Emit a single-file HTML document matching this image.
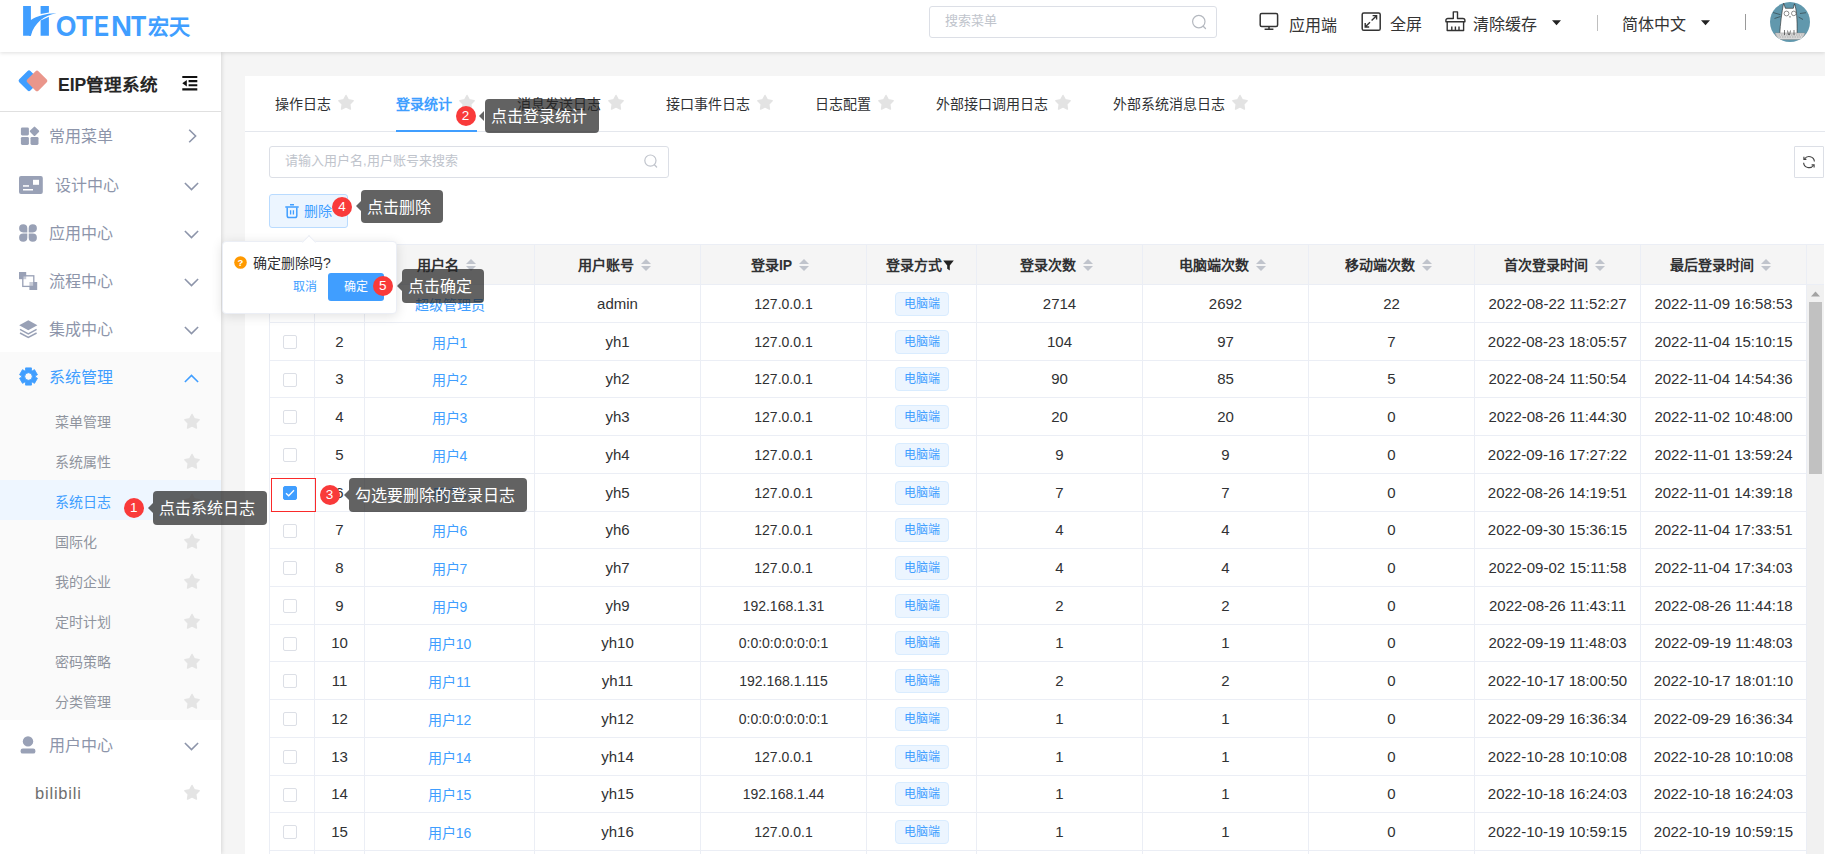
<!DOCTYPE html>
<html lang="zh-CN">
<head>
<meta charset="utf-8">
<title>EIP管理系统</title>
<style>
*{box-sizing:border-box;margin:0;padding:0}
html,body{width:1825px;height:854px;overflow:hidden;background:#f5f5f5;font-family:"Liberation Sans",sans-serif;color:#303133}
body{position:relative}
.a{position:absolute}
.t{position:absolute;white-space:nowrap}
svg{position:absolute;overflow:visible}
#hdr{position:absolute;left:0;top:0;width:1825px;height:52px;background:#fff;box-shadow:0 1px 4px rgba(0,0,0,.13);z-index:5}
#side{position:absolute;left:0;top:52px;width:221px;height:802px;background:#fff;box-shadow:1px 0 4px rgba(0,0,0,.12);z-index:4}
#card{position:absolute;left:245px;top:76px;width:1580px;height:778px;background:#fff;z-index:1}
.mi{position:absolute;left:50px;font-size:16px;line-height:22px;color:#8d95aa;white-space:nowrap}
.si{position:absolute;left:55px;font-size:14px;line-height:20px;color:#8f949e;white-space:nowrap}
.tab{position:absolute;top:93.7px;font-size:14px;line-height:20px;color:#303133;white-space:nowrap}
.th{position:absolute;top:244px;height:41px;background:#f5f5f5;border-right:1px solid #ebeef5;border-bottom:1px solid #ebeef5;border-top:1px solid #ebeef5;font-size:14px;font-weight:bold;color:#303133;text-align:center;line-height:40px;white-space:nowrap}
.th i{display:inline-block;position:relative;width:24px;height:14px;vertical-align:-3px}
.th i:before{content:"";position:absolute;left:7px;top:0;border:5px solid transparent;border-bottom-color:#c0c4cc;border-top-width:0}
.th i:after{content:"";position:absolute;left:7px;top:7px;border:5px solid transparent;border-top-color:#c0c4cc;border-bottom-width:0}
.r{position:absolute;left:269px;width:1538px;border-left:1px solid #ebeef5;border-bottom:1px solid #ebeef5}
.c{position:absolute;top:0;height:100%;border-right:1px solid #ebeef5;text-align:center;font-size:15px;color:#303133;white-space:nowrap}
.c a{color:#409eff;font-size:14px;position:relative;top:1px}
.c span.n{font-size:15px}
.tag{display:inline-block;position:relative;top:-1.5px;width:54px;height:24px;line-height:23px;border:1px solid #d9ecff;background:#ecf5ff;border-radius:4px;color:#409eff;font-size:12px;vertical-align:middle}
.cb{position:absolute;left:13px;width:14px;height:14px;border:1px solid #dcdfe6;border-radius:2px;background:#fff}
.tip{position:absolute;height:33.5px;border-radius:4px;background:rgba(38,38,38,.72);color:#fff;font-size:16px;line-height:36px;padding-left:6px;white-space:nowrap;z-index:20}
.tip:before{content:"";position:absolute;left:-5.5px;top:11.5px;border:5.5px solid transparent;border-right-color:rgba(38,38,38,.72);border-left-width:0}
.bdg{position:absolute;width:20px;height:20px;border-radius:10px;background:#f93a3a;color:#fff;font-size:13.5px;line-height:20px;text-align:center;z-index:21}
</style>
</head>
<body>
<div id="hdr">
<svg style="left:22px;top:5px" width="172" height="34" viewBox="0 0 172 34"><path d="M1.1 1h7.8v29.75H1.1z" fill="#409eff"/><path d="M18.6 1h8.3v6.5L18.6 8.9z" fill="#409eff"/><path d="M18.6 15.4L26.9 11.7v19.05h-8.3z" fill="#409eff"/><path d="M8.9 14.9C15 11.2 24 8.2 34.4 8.3 22.5 10.6 12.2 17.5 8.9 30.75H7V14.9z" fill="#409eff"/><g font-family="Liberation Sans, sans-serif" font-weight="bold" font-size="28.6" fill="#409eff"><text transform="translate(33.80 31.2) scale(0.930 1)">O</text><text transform="translate(53.95 31.2) scale(0.980 1)">T</text><text transform="translate(72.10 31.2) scale(0.785 1)">E</text><text transform="translate(89.10 31.2) scale(1.020 1)">N</text><text transform="translate(109.00 31.2) scale(0.870 1)">T</text></g></svg>
<div class="t" style="left:148px;top:11px;font-size:21px;line-height:32px;color:#409eff;font-weight:bold">宏天</div>
<div class="a" style="left:929px;top:6px;width:288px;height:32px;border:1px solid #dcdfe6;border-radius:3px;background:#fff"></div>
<div class="t" style="left:945px;top:12px;font-size:13px;line-height:18px;color:#c0c4cc">搜索菜单</div>
<svg style="left:1191px;top:14px" width="16" height="16" viewBox="0 0 16 16"><circle cx="7.8" cy="7.6" r="6.2" fill="none" stroke="#b4b8bf" stroke-width="1.2"/><path d="M12.2 12.2l2.3 2.3" stroke="#b4b8bf" stroke-width="1.3" stroke-linecap="round"/></svg>
<svg style="left:1259px;top:12px" width="20" height="18" viewBox="0 0 20 18"><rect x="1.2" y="1.4" width="17.4" height="13" rx="1.5" fill="none" stroke="#333" stroke-width="1.5"/><path d="M10 14.4v2.6M5.6 17.2h8.8" stroke="#333" stroke-width="1.5" fill="none"/></svg>
<div class="t" style="left:1289px;top:14.5px;font-size:16px;line-height:22px;color:#333">应用端</div>
<svg style="left:1361px;top:12px" width="20" height="19" viewBox="0 0 20 19"><rect x="1.2" y="0.9" width="18" height="17.4" rx="1.6" fill="none" stroke="#333" stroke-width="1.5"/><path d="M10.6 8.6l4.9-4.9M11.6 3.6h4v4M9 10.2l-4.6 4.6M4.2 11v4h4" stroke="#333" stroke-width="1.4" fill="none"/></svg>
<div class="t" style="left:1390px;top:13.5px;font-size:16px;line-height:22px;color:#333">全屏</div>
<svg style="left:1445px;top:11px" width="21" height="20" viewBox="0 0 21 20"><path d="M8.3 0.9h4.2v6.6h5.4a2 2 0 0 1 2 2v1.2H0.9V9.5a2 2 0 0 1 2-2h5.4z M2.2 10.7v8.8h16.4v-8.8 M6.8 19.5v-4 M10.4 19.5v-4 M14 19.5v-4" fill="none" stroke="#333" stroke-width="1.4" stroke-linejoin="round"/></svg>
<div class="t" style="left:1473px;top:13.5px;font-size:16px;line-height:22px;color:#333">清除缓存</div>
<svg style="left:1552.2px;top:20.2px" width="9" height="6" viewBox="0 0 9 6"><path d="M0 0.3h9L4.5 5.3z" fill="#222"/></svg>
<div class="a" style="left:1597px;top:15px;width:1px;height:16px;background:#bfbfbf"></div>
<div class="t" style="left:1622px;top:13.5px;font-size:16px;line-height:22px;color:#333">简体中文</div>
<svg style="left:1700.9px;top:20.2px" width="9" height="6" viewBox="0 0 9 6"><path d="M0 0.3h9L4.5 5.3z" fill="#222"/></svg>
<div class="a" style="left:1745px;top:14px;width:1px;height:16px;background:#9a9a9a"></div>
<svg style="left:1770px;top:2px" width="40" height="40" viewBox="0 0 40 40"><defs><clipPath id="av"><circle cx="20" cy="20" r="20"/></clipPath></defs><g clip-path="url(#av)"><rect width="40" height="40" fill="#6198ad"/><path d="M9.7 32.5C10.3 22 11.8 10 13.6 1.2L15.4 6.3H23.3L24.5 1.8C26.6 8 27.3 16 27.1 32.5z" fill="#fff" stroke="#222" stroke-width=".6"/><circle cx="16.5" cy="11.5" r="2.4" fill="#fff" stroke="#444" stroke-width=".6"/><circle cx="23.8" cy="11.4" r="2.3" fill="#fff" stroke="#444" stroke-width=".6"/><path d="M3 10.5l7.5 2.2M4.5 16.5l6-2M30 11.5l6-.8M28.5 15l4.5 2.5" stroke="#222" stroke-width=".5" fill="none"/><path d="M19 14.6h2l-1 1.2z" fill="#444"/><path d="M5 31h30l-2.5 6.5h-25z" fill="#d9d9d9" stroke="#888" stroke-width=".5"/><path d="M6 33h28M7 35h26" stroke="#999" stroke-width=".7" stroke-dasharray="1.5 1"/><path d="M14.5 28v5M17.5 28.5l1 4.5M20.5 28.5l-1 4.5M24 28v5" stroke="#222" stroke-width=".6"/></g></svg>
</div>
<div id="side">
<svg style="left:17px;top:17px" width="32" height="24" viewBox="0 0 32 24"><rect x="-7.9" y="-7.9" width="15.8" height="15.8" rx="2" transform="translate(12 11.75) rotate(45)" fill="#409eff"/><rect x="-7.9" y="-7.9" width="15.8" height="15.8" rx="2" transform="translate(20 11.9) rotate(45)" fill="#ea968b"/></svg>
<div class="t" style="left:58px;top:20.5px;font-size:17.6px;line-height:24px;font-weight:bold;color:#262626">EIP管理系统</div>
<svg style="left:182px;top:23px" width="16" height="15" viewBox="0 0 16 15"><path d="M0.3 2h15M6.6 6.1h8.7M6.6 10.3h8.7M0.3 14.4h15" stroke="#111" stroke-width="2.1"/><path d="M0.3 8.2L4.8 5v6.4z" fill="#111"/></svg>
<div class="a" style="left:0;top:59px;width:221px;height:1px;background:#e0e0e0"></div>
<div class="a" style="left:0;top:300px;width:221px;height:368px;background:#fafafa"></div>
<div class="a" style="left:0;top:428px;width:221px;height:40px;background:#eef6ff"></div>
<div class="mi" style="left:49px;top:74px;color:#8d95aa">常用菜单</div><svg style="left:187.5px;top:76.5px" width="9" height="14" viewBox="0 0 9 14"><path d="M1.2 0.8l6.4 6.2-6.4 6.2" fill="none" stroke="#8d95aa" stroke-width="1.6"/></svg>
<div class="mi" style="left:55px;top:123px;color:#8d95aa">设计中心</div><svg style="left:184px;top:129.5px" width="15" height="9" viewBox="0 0 15 9"><path d="M0.9 1l6.6 6.6L14.1 1" fill="none" stroke="#8d95aa" stroke-width="1.6"/></svg>
<div class="mi" style="left:49px;top:171px;color:#8d95aa">应用中心</div><svg style="left:184px;top:177.5px" width="15" height="9" viewBox="0 0 15 9"><path d="M0.9 1l6.6 6.6L14.1 1" fill="none" stroke="#8d95aa" stroke-width="1.6"/></svg>
<div class="mi" style="left:49px;top:219px;color:#8d95aa">流程中心</div><svg style="left:184px;top:225.5px" width="15" height="9" viewBox="0 0 15 9"><path d="M0.9 1l6.6 6.6L14.1 1" fill="none" stroke="#8d95aa" stroke-width="1.6"/></svg>
<div class="mi" style="left:49px;top:267px;color:#8d95aa">集成中心</div><svg style="left:184px;top:273.5px" width="15" height="9" viewBox="0 0 15 9"><path d="M0.9 1l6.6 6.6L14.1 1" fill="none" stroke="#8d95aa" stroke-width="1.6"/></svg>
<div class="mi" style="left:49px;top:315px;color:#409eff">系统管理</div><svg style="left:184px;top:321.5px" width="15" height="9" viewBox="0 0 15 9"><path d="M0.9 8l6.6-6.6L14.1 8" fill="none" stroke="#409eff" stroke-width="1.6"/></svg>
<div class="mi" style="left:49px;top:683px;color:#8d95aa">用户中心</div><svg style="left:184px;top:689.5px" width="15" height="9" viewBox="0 0 15 9"><path d="M0.9 1l6.6 6.6L14.1 1" fill="none" stroke="#8d95aa" stroke-width="1.6"/></svg>
<svg style="left:20px;top:75.3px" width="19" height="18" viewBox="0 0 19 18"><rect x="0.9" y="0.4" width="8" height="8" rx="1.4" fill="#99a1b6"/><rect x="0.9" y="9.9" width="8" height="8" rx="1.4" fill="#99a1b6"/><rect x="10.5" y="9.9" width="8" height="8" rx="1.4" fill="#99a1b6"/><rect x="-3.6" y="-3.6" width="7.2" height="7.2" rx="1" transform="translate(14.5 4.3) rotate(45)" fill="#99a1b6"/></svg>
<svg style="left:19px;top:124px" width="24" height="18" viewBox="0 0 24 18"><rect x="0" y="0" width="23.8" height="18" rx="2" fill="#99a1b6"/><rect x="14" y="3.8" width="6" height="5" fill="#fff"/><rect x="4" y="9.2" width="6" height="1.5" fill="#fff"/><rect x="4" y="13" width="10" height="1.5" fill="#fff"/></svg>
<svg style="left:19px;top:172px" width="18" height="18" viewBox="0 0 18 18"><path d="M4.2 0.2A4.1 4.1 0 0 1 8.3 4.3V8.4H4.2A4.1 4.1 0 0 1 4.2 0.2zM13.8 0.2A4.1 4.1 0 0 1 13.8 8.4H9.7V4.3A4.1 4.1 0 0 1 13.8 0.2zM4.2 17.8A4.1 4.1 0 0 1 4.2 9.6H8.3V13.7A4.1 4.1 0 0 1 4.2 17.8zM13.8 17.8A4.1 4.1 0 0 1 9.7 13.7V9.6H13.8A4.1 4.1 0 0 1 13.8 17.8z" fill="#99a1b6"/></svg>
<svg style="left:19px;top:220px" width="18" height="18" viewBox="0 0 18 18"><rect x="0" y="0" width="7.2" height="7.2" fill="#99a1b6"/><rect x="10.4" y="10" width="7.8" height="8" fill="#99a1b6"/><rect x="3.8" y="3.8" width="11" height="10.6" fill="#fff" stroke="#99a1b6" stroke-width="1.3"/><rect x="3.2" y="3.2" width="4" height="4" fill="#99a1b6" opacity=".55"/><rect x="10.4" y="10" width="4.6" height="4.4" fill="#99a1b6" opacity=".55"/></svg>
<svg style="left:19px;top:268px" width="19" height="18" viewBox="0 0 19 18"><path d="M9.3 0.2L18.4 5.2 9.3 10.2 0.2 5.2z" fill="#99a1b6"/><path d="M1 9.4l8.3 4.4 8.3-4.4M1 13l8.3 4.4 8.3-4.4" fill="none" stroke="#99a1b6" stroke-width="1.5"/></svg>
<svg style="left:18.6px;top:315.4px" width="19" height="19" viewBox="-9.5 -9.5 19 19"><path d="M-2.95 -8.61 L2.95 -8.61 L2.88 -6.27 L3.99 -5.63 L5.98 -6.86 L8.93 -1.75 L6.87 -0.64 L6.87 0.64 L8.93 1.75 L5.98 6.86 L3.99 5.63 L2.88 6.27 L2.95 8.61 L-2.95 8.61 L-2.88 6.27 L-3.99 5.63 L-5.98 6.86 L-8.93 1.75 L-6.87 0.64 L-6.87 -0.64 L-8.93 -1.75 L-5.98 -6.86 L-3.99 -5.63 L-2.88 -6.27Z M3.8 0A3.8 3.8 0 1 0 -3.8 0A3.8 3.8 0 1 0 3.8 0Z" fill="#409eff" fill-rule="evenodd" stroke="#409eff" stroke-width="0.9" stroke-linejoin="round"/></svg>
<svg style="left:20px;top:684px" width="16" height="18" viewBox="0 0 16 18"><circle cx="8" cy="5.4" r="5.2" fill="#99a1b6"/><rect x="0.6" y="12.6" width="14.8" height="5" rx="2.2" fill="#99a1b6"/></svg>
<div class="si" style="top:360px;color:#8f949e">菜单管理</div><svg style="left:182.5px;top:361.3px" width="18" height="18" viewBox="-9 -9 18 18"><path d="M0.00 -7.50L2.29 -3.16L7.13 -2.32L3.71 1.21L4.41 6.07L0.00 3.90L-4.41 6.07L-3.71 1.21L-7.13 -2.32L-2.29 -3.16Z" fill="#e4e4e4" stroke="#e4e4e4" stroke-width="1.5" stroke-linejoin="round"/></svg>
<div class="si" style="top:400px;color:#8f949e">系统属性</div><svg style="left:182.5px;top:401.3px" width="18" height="18" viewBox="-9 -9 18 18"><path d="M0.00 -7.50L2.29 -3.16L7.13 -2.32L3.71 1.21L4.41 6.07L0.00 3.90L-4.41 6.07L-3.71 1.21L-7.13 -2.32L-2.29 -3.16Z" fill="#e4e4e4" stroke="#e4e4e4" stroke-width="1.5" stroke-linejoin="round"/></svg>
<div class="si" style="top:440px;color:#409eff">系统日志</div><svg style="left:182.5px;top:441.3px" width="18" height="18" viewBox="-9 -9 18 18"><path d="M0.00 -7.50L2.29 -3.16L7.13 -2.32L3.71 1.21L4.41 6.07L0.00 3.90L-4.41 6.07L-3.71 1.21L-7.13 -2.32L-2.29 -3.16Z" fill="#e4e4e4" stroke="#e4e4e4" stroke-width="1.5" stroke-linejoin="round"/></svg>
<div class="si" style="top:480px;color:#8f949e">国际化</div><svg style="left:182.5px;top:481.3px" width="18" height="18" viewBox="-9 -9 18 18"><path d="M0.00 -7.50L2.29 -3.16L7.13 -2.32L3.71 1.21L4.41 6.07L0.00 3.90L-4.41 6.07L-3.71 1.21L-7.13 -2.32L-2.29 -3.16Z" fill="#e4e4e4" stroke="#e4e4e4" stroke-width="1.5" stroke-linejoin="round"/></svg>
<div class="si" style="top:520px;color:#8f949e">我的企业</div><svg style="left:182.5px;top:521.3px" width="18" height="18" viewBox="-9 -9 18 18"><path d="M0.00 -7.50L2.29 -3.16L7.13 -2.32L3.71 1.21L4.41 6.07L0.00 3.90L-4.41 6.07L-3.71 1.21L-7.13 -2.32L-2.29 -3.16Z" fill="#e4e4e4" stroke="#e4e4e4" stroke-width="1.5" stroke-linejoin="round"/></svg>
<div class="si" style="top:560px;color:#8f949e">定时计划</div><svg style="left:182.5px;top:561.3px" width="18" height="18" viewBox="-9 -9 18 18"><path d="M0.00 -7.50L2.29 -3.16L7.13 -2.32L3.71 1.21L4.41 6.07L0.00 3.90L-4.41 6.07L-3.71 1.21L-7.13 -2.32L-2.29 -3.16Z" fill="#e4e4e4" stroke="#e4e4e4" stroke-width="1.5" stroke-linejoin="round"/></svg>
<div class="si" style="top:600px;color:#8f949e">密码策略</div><svg style="left:182.5px;top:601.3px" width="18" height="18" viewBox="-9 -9 18 18"><path d="M0.00 -7.50L2.29 -3.16L7.13 -2.32L3.71 1.21L4.41 6.07L0.00 3.90L-4.41 6.07L-3.71 1.21L-7.13 -2.32L-2.29 -3.16Z" fill="#e4e4e4" stroke="#e4e4e4" stroke-width="1.5" stroke-linejoin="round"/></svg>
<div class="si" style="top:640px;color:#8f949e">分类管理</div><svg style="left:182.5px;top:641.3px" width="18" height="18" viewBox="-9 -9 18 18"><path d="M0.00 -7.50L2.29 -3.16L7.13 -2.32L3.71 1.21L4.41 6.07L0.00 3.90L-4.41 6.07L-3.71 1.21L-7.13 -2.32L-2.29 -3.16Z" fill="#e4e4e4" stroke="#e4e4e4" stroke-width="1.5" stroke-linejoin="round"/></svg>
<div class="t" style="left:35px;top:730px;font-size:16.5px;line-height:22px;color:#6e6e6e;letter-spacing:.8px">bilibili</div><svg style="left:182.5px;top:732.3px" width="18" height="18" viewBox="-9 -9 18 18"><path d="M0.00 -7.50L2.29 -3.16L7.13 -2.32L3.71 1.21L4.41 6.07L0.00 3.90L-4.41 6.07L-3.71 1.21L-7.13 -2.32L-2.29 -3.16Z" fill="#e4e4e4" stroke="#e4e4e4" stroke-width="1.5" stroke-linejoin="round"/></svg>
</div>
<div id="card"></div>
<div class="a" style="left:0;top:0;z-index:2">
<div class="a" style="left:245px;top:131px;width:1580px;height:1px;background:#e4e7ed"></div>
<div class="a" style="left:396px;top:129.5px;width:80.5px;height:2px;background:#409eff"></div>
<div class="tab" style="left:275px;color:#303133">操作日志</div><svg style="left:337.3px;top:94.2px" width="18" height="18" viewBox="-9 -9 18 18"><path d="M0.00 -7.50L2.29 -3.16L7.13 -2.32L3.71 1.21L4.41 6.07L0.00 3.90L-4.41 6.07L-3.71 1.21L-7.13 -2.32L-2.29 -3.16Z" fill="#e3e3e3" stroke="#e3e3e3" stroke-width="1.5" stroke-linejoin="round"/></svg>
<div class="tab" style="left:396px;color:#409eff;font-weight:bold">登录统计</div><svg style="left:458.3px;top:94.2px" width="18" height="18" viewBox="-9 -9 18 18"><path d="M0.00 -7.50L2.29 -3.16L7.13 -2.32L3.71 1.21L4.41 6.07L0.00 3.90L-4.41 6.07L-3.71 1.21L-7.13 -2.32L-2.29 -3.16Z" fill="#e3e3e3" stroke="#e3e3e3" stroke-width="1.5" stroke-linejoin="round"/></svg>
<div class="tab" style="left:517px;color:#303133">消息发送日志</div><svg style="left:607.3px;top:94.2px" width="18" height="18" viewBox="-9 -9 18 18"><path d="M0.00 -7.50L2.29 -3.16L7.13 -2.32L3.71 1.21L4.41 6.07L0.00 3.90L-4.41 6.07L-3.71 1.21L-7.13 -2.32L-2.29 -3.16Z" fill="#e3e3e3" stroke="#e3e3e3" stroke-width="1.5" stroke-linejoin="round"/></svg>
<div class="tab" style="left:666px;color:#303133">接口事件日志</div><svg style="left:756.3px;top:94.2px" width="18" height="18" viewBox="-9 -9 18 18"><path d="M0.00 -7.50L2.29 -3.16L7.13 -2.32L3.71 1.21L4.41 6.07L0.00 3.90L-4.41 6.07L-3.71 1.21L-7.13 -2.32L-2.29 -3.16Z" fill="#e3e3e3" stroke="#e3e3e3" stroke-width="1.5" stroke-linejoin="round"/></svg>
<div class="tab" style="left:815px;color:#303133">日志配置</div><svg style="left:877.3px;top:94.2px" width="18" height="18" viewBox="-9 -9 18 18"><path d="M0.00 -7.50L2.29 -3.16L7.13 -2.32L3.71 1.21L4.41 6.07L0.00 3.90L-4.41 6.07L-3.71 1.21L-7.13 -2.32L-2.29 -3.16Z" fill="#e3e3e3" stroke="#e3e3e3" stroke-width="1.5" stroke-linejoin="round"/></svg>
<div class="tab" style="left:936px;color:#303133">外部接口调用日志</div><svg style="left:1054.3px;top:94.2px" width="18" height="18" viewBox="-9 -9 18 18"><path d="M0.00 -7.50L2.29 -3.16L7.13 -2.32L3.71 1.21L4.41 6.07L0.00 3.90L-4.41 6.07L-3.71 1.21L-7.13 -2.32L-2.29 -3.16Z" fill="#e3e3e3" stroke="#e3e3e3" stroke-width="1.5" stroke-linejoin="round"/></svg>
<div class="tab" style="left:1113px;color:#303133">外部系统消息日志</div><svg style="left:1231.3px;top:94.2px" width="18" height="18" viewBox="-9 -9 18 18"><path d="M0.00 -7.50L2.29 -3.16L7.13 -2.32L3.71 1.21L4.41 6.07L0.00 3.90L-4.41 6.07L-3.71 1.21L-7.13 -2.32L-2.29 -3.16Z" fill="#e3e3e3" stroke="#e3e3e3" stroke-width="1.5" stroke-linejoin="round"/></svg>
<div class="a" style="left:269px;top:146px;width:400px;height:32px;border:1px solid #dcdfe6;border-radius:3px;background:#fff"></div>
<div class="t" style="left:285px;top:152px;font-size:13px;line-height:18px;color:#c0c4cc">请输入用户名,用户账号来搜索</div>
<svg style="left:643px;top:153px" width="16" height="16" viewBox="0 0 16 16"><circle cx="7.4" cy="7.6" r="5.6" fill="none" stroke="#c0c4cc" stroke-width="1.2"/><path d="M11.4 11.8l2.2 2.2" stroke="#c0c4cc" stroke-width="1.3" stroke-linecap="round"/></svg>
<div class="a" style="left:1794px;top:146px;width:30px;height:32px;border:1px solid #dcdfe6;border-radius:1px;background:#fff"></div>
<svg style="left:1802.2px;top:154.9px" width="14" height="14" viewBox="-7 -7 14 14"><path d="M-4.5 -3A5.4 5.4 0 0 1 5.4 -0.5M-5.4 0.7A5.4 5.4 0 0 0 4.5 3.2" fill="none" stroke="#444" stroke-width="1.15"/><path d="M-5.1 -5.2v2.5h2.5M5.1 5.4v-2.5h-2.5" fill="none" stroke="#444" stroke-width="1.15"/></svg>
<div class="a" style="left:269px;top:194px;width:79px;height:34px;border:1px solid #b9dbff;border-radius:3px;background:#ecf5ff"></div>
<svg style="left:285px;top:203.5px" width="14" height="15" viewBox="0 0 14 15"><path d="M0.3 3.1h13.4M5 0.8h4" stroke="#409eff" stroke-width="1.5" fill="none"/><path d="M2.2 3.4v8.4a1.8 1.8 0 0 0 1.8 1.8h6a1.8 1.8 0 0 0 1.8-1.8V3.4" fill="none" stroke="#409eff" stroke-width="1.5"/><path d="M5.6 6.2v4.4M8.4 6.2v4.4" stroke="#409eff" stroke-width="1.3"/></svg>
<div class="t" style="left:304px;top:201px;font-size:14px;line-height:20px;color:#409eff">删除</div>
<div class="a" style="left:269px;top:244px;width:1555px;height:41px;background:#f5f5f5;border-top:1px solid #ebeef5;border-bottom:1px solid #ebeef5;border-left:1px solid #ebeef5"></div>
<div class="th" style="left:270px;width:45px"></div>
<div class="th" style="left:315px;width:50px"></div>
<div class="th" style="left:365px;width:170px">用户名<i></i></div>
<div class="th" style="left:535px;width:166px">用户账号<i></i></div>
<div class="th" style="left:701px;width:166px">登录IP<i></i></div>
<div class="th" style="left:867px;width:110px;padding-right:3px">登录方式<svg style="position:relative;display:inline-block;vertical-align:-1px;margin-left:1px" width="11" height="11" viewBox="0 0 11 11"><path d="M0.2 0.4h10.6L6.8 5.4v5.2L4.2 8.8V5.4z" fill="#222"/></svg></div>
<div class="th" style="left:977px;width:166px">登录次数<i></i></div>
<div class="th" style="left:1143px;width:166px">电脑端次数<i></i></div>
<div class="th" style="left:1309px;width:166px">移动端次数<i></i></div>
<div class="th" style="left:1475px;width:166px">首次登录时间<i></i></div>
<div class="th" style="left:1641px;width:166px">最后登录时间<i></i></div>
<div class="r" style="top:285px;height:38px;line-height:37px"><div class="c" style="left:0px;width:45px"><span class="cb" style="top:12px"></span></div><div class="c" style="left:45px;width:50px">1</div><div class="c" style="left:95px;width:170px"><a>超级管理员</a></div><div class="c" style="left:265px;width:166px">admin</div><div class="c" style="left:431px;width:166px"><span style="font-size:14px">127.0.0.1</span></div><div class="c" style="left:597px;width:110px"><span class="tag">电脑端</span></div><div class="c" style="left:707px;width:166px">2714</div><div class="c" style="left:873px;width:166px">2692</div><div class="c" style="left:1039px;width:166px">22</div><div class="c" style="left:1205px;width:166px">2022-08-22 11:52:27</div><div class="c" style="left:1371px;width:166px">2022-11-09 16:58:53</div></div>
<div class="r" style="top:323px;height:38px;line-height:37px"><div class="c" style="left:0px;width:45px"><span class="cb" style="top:12px"></span></div><div class="c" style="left:45px;width:50px">2</div><div class="c" style="left:95px;width:170px"><a>用户1</a></div><div class="c" style="left:265px;width:166px">yh1</div><div class="c" style="left:431px;width:166px"><span style="font-size:14px">127.0.0.1</span></div><div class="c" style="left:597px;width:110px"><span class="tag">电脑端</span></div><div class="c" style="left:707px;width:166px">104</div><div class="c" style="left:873px;width:166px">97</div><div class="c" style="left:1039px;width:166px">7</div><div class="c" style="left:1205px;width:166px">2022-08-23 18:05:57</div><div class="c" style="left:1371px;width:166px">2022-11-04 15:10:15</div></div>
<div class="r" style="top:361px;height:37px;line-height:36px"><div class="c" style="left:0px;width:45px"><span class="cb" style="top:12px"></span></div><div class="c" style="left:45px;width:50px">3</div><div class="c" style="left:95px;width:170px"><a>用户2</a></div><div class="c" style="left:265px;width:166px">yh2</div><div class="c" style="left:431px;width:166px"><span style="font-size:14px">127.0.0.1</span></div><div class="c" style="left:597px;width:110px"><span class="tag">电脑端</span></div><div class="c" style="left:707px;width:166px">90</div><div class="c" style="left:873px;width:166px">85</div><div class="c" style="left:1039px;width:166px">5</div><div class="c" style="left:1205px;width:166px">2022-08-24 11:50:54</div><div class="c" style="left:1371px;width:166px">2022-11-04 14:54:36</div></div>
<div class="r" style="top:398px;height:38px;line-height:37px"><div class="c" style="left:0px;width:45px"><span class="cb" style="top:12px"></span></div><div class="c" style="left:45px;width:50px">4</div><div class="c" style="left:95px;width:170px"><a>用户3</a></div><div class="c" style="left:265px;width:166px">yh3</div><div class="c" style="left:431px;width:166px"><span style="font-size:14px">127.0.0.1</span></div><div class="c" style="left:597px;width:110px"><span class="tag">电脑端</span></div><div class="c" style="left:707px;width:166px">20</div><div class="c" style="left:873px;width:166px">20</div><div class="c" style="left:1039px;width:166px">0</div><div class="c" style="left:1205px;width:166px">2022-08-26 11:44:30</div><div class="c" style="left:1371px;width:166px">2022-11-02 10:48:00</div></div>
<div class="r" style="top:436px;height:38px;line-height:37px"><div class="c" style="left:0px;width:45px"><span class="cb" style="top:12px"></span></div><div class="c" style="left:45px;width:50px">5</div><div class="c" style="left:95px;width:170px"><a>用户4</a></div><div class="c" style="left:265px;width:166px">yh4</div><div class="c" style="left:431px;width:166px"><span style="font-size:14px">127.0.0.1</span></div><div class="c" style="left:597px;width:110px"><span class="tag">电脑端</span></div><div class="c" style="left:707px;width:166px">9</div><div class="c" style="left:873px;width:166px">9</div><div class="c" style="left:1039px;width:166px">0</div><div class="c" style="left:1205px;width:166px">2022-09-16 17:27:22</div><div class="c" style="left:1371px;width:166px">2022-11-01 13:59:24</div></div>
<div class="r" style="top:474px;height:38px;line-height:37px"><div class="c" style="left:0px;width:45px"><span class="cb" style="top:12px;background:#409eff;border-color:#409eff"></span><svg style="left:14.8px;top:15px" width="10" height="8" viewBox="0 0 10 8"><path d="M1 4.2l2.7 2.6L9 1.2" fill="none" stroke="#fff" stroke-width="1.3"/></svg></div><div class="c" style="left:45px;width:50px">6</div><div class="c" style="left:95px;width:170px"><a>用户5</a></div><div class="c" style="left:265px;width:166px">yh5</div><div class="c" style="left:431px;width:166px"><span style="font-size:14px">127.0.0.1</span></div><div class="c" style="left:597px;width:110px"><span class="tag">电脑端</span></div><div class="c" style="left:707px;width:166px">7</div><div class="c" style="left:873px;width:166px">7</div><div class="c" style="left:1039px;width:166px">0</div><div class="c" style="left:1205px;width:166px">2022-08-26 14:19:51</div><div class="c" style="left:1371px;width:166px">2022-11-01 14:39:18</div></div>
<div class="r" style="top:512px;height:37px;line-height:36px"><div class="c" style="left:0px;width:45px"><span class="cb" style="top:12px"></span></div><div class="c" style="left:45px;width:50px">7</div><div class="c" style="left:95px;width:170px"><a>用户6</a></div><div class="c" style="left:265px;width:166px">yh6</div><div class="c" style="left:431px;width:166px"><span style="font-size:14px">127.0.0.1</span></div><div class="c" style="left:597px;width:110px"><span class="tag">电脑端</span></div><div class="c" style="left:707px;width:166px">4</div><div class="c" style="left:873px;width:166px">4</div><div class="c" style="left:1039px;width:166px">0</div><div class="c" style="left:1205px;width:166px">2022-09-30 15:36:15</div><div class="c" style="left:1371px;width:166px">2022-11-04 17:33:51</div></div>
<div class="r" style="top:549px;height:38px;line-height:37px"><div class="c" style="left:0px;width:45px"><span class="cb" style="top:12px"></span></div><div class="c" style="left:45px;width:50px">8</div><div class="c" style="left:95px;width:170px"><a>用户7</a></div><div class="c" style="left:265px;width:166px">yh7</div><div class="c" style="left:431px;width:166px"><span style="font-size:14px">127.0.0.1</span></div><div class="c" style="left:597px;width:110px"><span class="tag">电脑端</span></div><div class="c" style="left:707px;width:166px">4</div><div class="c" style="left:873px;width:166px">4</div><div class="c" style="left:1039px;width:166px">0</div><div class="c" style="left:1205px;width:166px">2022-09-02 15:11:58</div><div class="c" style="left:1371px;width:166px">2022-11-04 17:34:03</div></div>
<div class="r" style="top:587px;height:38px;line-height:37px"><div class="c" style="left:0px;width:45px"><span class="cb" style="top:12px"></span></div><div class="c" style="left:45px;width:50px">9</div><div class="c" style="left:95px;width:170px"><a>用户9</a></div><div class="c" style="left:265px;width:166px">yh9</div><div class="c" style="left:431px;width:166px"><span style="font-size:14px">192.168.1.31</span></div><div class="c" style="left:597px;width:110px"><span class="tag">电脑端</span></div><div class="c" style="left:707px;width:166px">2</div><div class="c" style="left:873px;width:166px">2</div><div class="c" style="left:1039px;width:166px">0</div><div class="c" style="left:1205px;width:166px">2022-08-26 11:43:11</div><div class="c" style="left:1371px;width:166px">2022-08-26 11:44:18</div></div>
<div class="r" style="top:625px;height:37px;line-height:36px"><div class="c" style="left:0px;width:45px"><span class="cb" style="top:12px"></span></div><div class="c" style="left:45px;width:50px">10</div><div class="c" style="left:95px;width:170px"><a>用户10</a></div><div class="c" style="left:265px;width:166px">yh10</div><div class="c" style="left:431px;width:166px"><span style="font-size:14px">0:0:0:0:0:0:0:1</span></div><div class="c" style="left:597px;width:110px"><span class="tag">电脑端</span></div><div class="c" style="left:707px;width:166px">1</div><div class="c" style="left:873px;width:166px">1</div><div class="c" style="left:1039px;width:166px">0</div><div class="c" style="left:1205px;width:166px">2022-09-19 11:48:03</div><div class="c" style="left:1371px;width:166px">2022-09-19 11:48:03</div></div>
<div class="r" style="top:662px;height:38px;line-height:37px"><div class="c" style="left:0px;width:45px"><span class="cb" style="top:12px"></span></div><div class="c" style="left:45px;width:50px">11</div><div class="c" style="left:95px;width:170px"><a>用户11</a></div><div class="c" style="left:265px;width:166px">yh11</div><div class="c" style="left:431px;width:166px"><span style="font-size:14px">192.168.1.115</span></div><div class="c" style="left:597px;width:110px"><span class="tag">电脑端</span></div><div class="c" style="left:707px;width:166px">2</div><div class="c" style="left:873px;width:166px">2</div><div class="c" style="left:1039px;width:166px">0</div><div class="c" style="left:1205px;width:166px">2022-10-17 18:00:50</div><div class="c" style="left:1371px;width:166px">2022-10-17 18:01:10</div></div>
<div class="r" style="top:700px;height:38px;line-height:37px"><div class="c" style="left:0px;width:45px"><span class="cb" style="top:12px"></span></div><div class="c" style="left:45px;width:50px">12</div><div class="c" style="left:95px;width:170px"><a>用户12</a></div><div class="c" style="left:265px;width:166px">yh12</div><div class="c" style="left:431px;width:166px"><span style="font-size:14px">0:0:0:0:0:0:0:1</span></div><div class="c" style="left:597px;width:110px"><span class="tag">电脑端</span></div><div class="c" style="left:707px;width:166px">1</div><div class="c" style="left:873px;width:166px">1</div><div class="c" style="left:1039px;width:166px">0</div><div class="c" style="left:1205px;width:166px">2022-09-29 16:36:34</div><div class="c" style="left:1371px;width:166px">2022-09-29 16:36:34</div></div>
<div class="r" style="top:738px;height:38px;line-height:37px"><div class="c" style="left:0px;width:45px"><span class="cb" style="top:12px"></span></div><div class="c" style="left:45px;width:50px">13</div><div class="c" style="left:95px;width:170px"><a>用户14</a></div><div class="c" style="left:265px;width:166px">yh14</div><div class="c" style="left:431px;width:166px"><span style="font-size:14px">127.0.0.1</span></div><div class="c" style="left:597px;width:110px"><span class="tag">电脑端</span></div><div class="c" style="left:707px;width:166px">1</div><div class="c" style="left:873px;width:166px">1</div><div class="c" style="left:1039px;width:166px">0</div><div class="c" style="left:1205px;width:166px">2022-10-28 10:10:08</div><div class="c" style="left:1371px;width:166px">2022-10-28 10:10:08</div></div>
<div class="r" style="top:776px;height:37px;line-height:36px"><div class="c" style="left:0px;width:45px"><span class="cb" style="top:12px"></span></div><div class="c" style="left:45px;width:50px">14</div><div class="c" style="left:95px;width:170px"><a>用户15</a></div><div class="c" style="left:265px;width:166px">yh15</div><div class="c" style="left:431px;width:166px"><span style="font-size:14px">192.168.1.44</span></div><div class="c" style="left:597px;width:110px"><span class="tag">电脑端</span></div><div class="c" style="left:707px;width:166px">1</div><div class="c" style="left:873px;width:166px">1</div><div class="c" style="left:1039px;width:166px">0</div><div class="c" style="left:1205px;width:166px">2022-10-18 16:24:03</div><div class="c" style="left:1371px;width:166px">2022-10-18 16:24:03</div></div>
<div class="r" style="top:813px;height:38px;line-height:37px"><div class="c" style="left:0px;width:45px"><span class="cb" style="top:12px"></span></div><div class="c" style="left:45px;width:50px">15</div><div class="c" style="left:95px;width:170px"><a>用户16</a></div><div class="c" style="left:265px;width:166px">yh16</div><div class="c" style="left:431px;width:166px"><span style="font-size:14px">127.0.0.1</span></div><div class="c" style="left:597px;width:110px"><span class="tag">电脑端</span></div><div class="c" style="left:707px;width:166px">1</div><div class="c" style="left:873px;width:166px">1</div><div class="c" style="left:1039px;width:166px">0</div><div class="c" style="left:1205px;width:166px">2022-10-19 10:59:15</div><div class="c" style="left:1371px;width:166px">2022-10-19 10:59:15</div></div>
<div class="r" style="top:851px;height:38px;line-height:37px"><div class="c" style="left:0px;width:45px"></div><div class="c" style="left:45px;width:50px"></div><div class="c" style="left:95px;width:170px"></div><div class="c" style="left:265px;width:166px"></div><div class="c" style="left:431px;width:166px"></div><div class="c" style="left:597px;width:110px"></div><div class="c" style="left:707px;width:166px"></div><div class="c" style="left:873px;width:166px"></div><div class="c" style="left:1039px;width:166px"></div><div class="c" style="left:1205px;width:166px"></div><div class="c" style="left:1371px;width:166px"></div></div>
<div class="a" style="left:1807px;top:285px;width:17px;height:569px;background:#f1f1f1"></div>
<svg style="left:1811px;top:291px" width="9" height="6" viewBox="0 0 9 6"><path d="M0 5.6h9L4.5 0.4z" fill="#a3a3a3"/></svg>
<div class="a" style="left:1809px;top:302px;width:13px;height:172px;background:#c1c1c1"></div>
</div>
<div class="a" style="left:221.5px;top:240.5px;width:175px;height:73px;background:#fff;border:1px solid #ebeef5;border-radius:4px;box-shadow:0 2px 12px rgba(0,0,0,.12);z-index:15"></div>
<div class="a" style="left:303.5px;top:236.5px;width:10px;height:10px;background:#fff;border-left:1px solid #ebeef5;border-top:1px solid #ebeef5;transform:rotate(45deg);z-index:16"></div>
<div class="a" style="left:0;top:0;z-index:17"><svg style="left:234.2px;top:255.6px" width="13" height="13" viewBox="0 0 13 13"><circle cx="6.5" cy="6.5" r="6.3" fill="#ff9900"/><text x="6.5" y="10" font-size="9.5" font-weight="bold" text-anchor="middle" fill="#fff" font-family="Liberation Sans, sans-serif">?</text></svg><div class="t" style="left:253px;top:253px;font-size:14px;line-height:20px;color:#303133">确定删除吗?</div><div class="t" style="left:293px;top:279.3px;font-size:12px;line-height:17px;color:#409eff">取消</div><div class="a" style="left:328px;top:273px;width:56px;height:28px;background:#409eff;border-radius:3px"></div><div class="t" style="left:344px;top:279.2px;font-size:12px;line-height:17px;color:#fff">确定</div></div>
<div class="a" style="left:271px;top:478px;width:45px;height:34px;border:1px solid #fa2a2a;z-index:18"></div>
<div class="tip" style="left:153px;top:491px;width:114px">点击系统日志</div>
<div class="bdg" style="left:123.75px;top:498px">1</div>
<div class="tip" style="left:484.5px;top:99.2px;width:114.5px">点击登录统计</div>
<div class="bdg" style="left:455.6px;top:105.75px">2</div>
<div class="tip" style="left:349px;top:478px;width:178px">勾选要删除的登录日志</div>
<div class="bdg" style="left:319.5px;top:485px">3</div>
<div class="tip" style="left:361px;top:189.8px;width:81.5px">点击删除</div>
<div class="bdg" style="left:332px;top:197px">4</div>
<div class="tip" style="left:402px;top:269.3px;width:82px">点击确定</div>
<div class="bdg" style="left:372.7px;top:275.8px">5</div>
</body>
</html>
